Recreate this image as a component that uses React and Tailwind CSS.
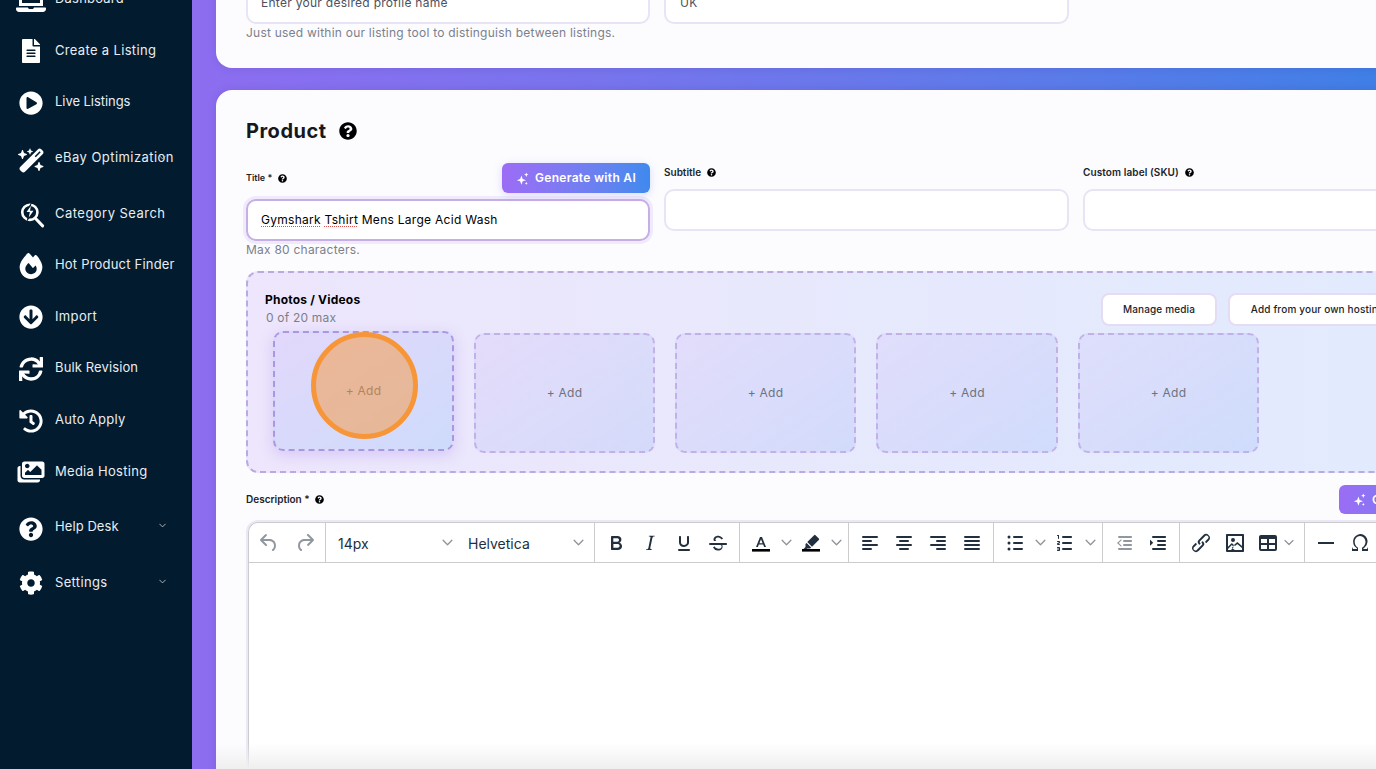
import React from "react";
import { FaLaptop, FaFileAlt, FaPlayCircle, FaArrowCircleDown, FaSync, FaHistory, FaImages, FaQuestionCircle, FaCog } from "react-icons/fa";
import { FaWandMagicSparkles, FaFire } from "react-icons/fa6";

const SearchBolt = ({ className }) => (
  <svg viewBox="0 0 24 24" className={className} fill="none" stroke="currentColor">
    <circle cx="10" cy="9.5" r="7" strokeWidth="2.4" />
    <path d="M11.5 0.5 4.8 10.2h3.8l-1.6 8.3 7.6-10.6h-4z" fill="#021b2f" stroke="none" />
    <path d="M11 3.5 7 9.2h3l-1 5 4.4-6.2h-3.2z" fill="currentColor" stroke="none" />
    <path d="M15.5 15.5 21.8 22" strokeWidth="2.8" strokeLinecap="round" />
  </svg>
);

const nav = [
  { label: "Dashboard", icon: <FaLaptop className="w-[30px] h-[30px]" />, row: "h-[50px] -mt-[25px]", text: "mb-[2px] tracking-[0.2px]" },
  { label: "Create a Listing", icon: <FaFileAlt className="w-[24px] h-[24px]" />, row: "h-[52px]", text: "mb-[0px] tracking-[0.33px]" },
  { label: "Live Listings", icon: <FaPlayCircle className="w-[24px] h-[24px]" />, row: "h-[52px]", text: "mb-[2px] tracking-[-0.05px]" },
  { label: "eBay Optimization", icon: <FaWandMagicSparkles className="w-[27px] h-[27px]" />, row: "h-[62px]", text: "mb-[4px] tracking-[0.45px]", chevron: "top-[26px]" },
  { label: "Category Search", icon: <SearchBolt className="w-[26px] h-[26px] ml-[1px]" />, row: "h-[48px]", text: "mb-[2px] tracking-[0.47px]" },
  { label: "Hot Product Finder", icon: <FaFire className="w-[26px] h-[26px]" />, row: "h-[54px]", text: "mb-[2px] tracking-[0.2px]" },
  { label: "Import", icon: <FaArrowCircleDown className="w-[24px] h-[24px]" />, row: "h-[48px]", text: "mb-[0px] tracking-[0.35px]" },
  { label: "Bulk Revision", icon: <FaSync className="w-[24px] h-[24px]" />, row: "h-[56px]", text: "mb-[2px] tracking-[0.12px]" },
  { label: "Auto Apply", icon: <FaHistory className="w-[24px] h-[24px]" />, row: "h-[48px]", text: "mb-[2px] tracking-[0.3px]" },
  { label: "Media Hosting", icon: <FaImages className="w-[28px] h-[24px]" />, row: "h-[54px]", text: "mb-[0px] tracking-[0.28px]" },
  { label: "Help Desk", icon: <FaQuestionCircle className="w-[24px] h-[24px]" />, row: "h-[60px]", text: "mb-[4px] tracking-[0.08px]", chevron: "top-[24px]" },
  { label: "Settings", icon: <FaCog className="w-[24px] h-[24px]" />, row: "h-[48px]", text: "mb-[0px] tracking-[0.33px]", chevron: "top-[20px]" },
];

const Chevron = ({ className = "" }) => (
  <svg viewBox="0 0 10 6" className={className} fill="none" stroke="currentColor" strokeWidth="1.2" strokeLinecap="round" strokeLinejoin="round">
    <path d="M1 1l4 4 4-4" />
  </svg>
);

const Help = ({ className = "" }) => (
  <FaQuestionCircle className={"text-black " + className} />
);

const Sparkle = ({ className = "" }) => (
  <svg viewBox="0 0 24 24" className={className} fill="currentColor">
    <path d="M10 6.5 12.3 12.7 18.5 15 12.3 17.3 10 23.5 7.7 17.3 1.5 15 7.7 12.7z" />
    <path d="M19 1 20.2 3.8 23 5 20.2 6.2 19 9 17.8 6.2 15 5 17.8 3.8z" />
    <path d="M19 18 19.9 20.1 22 21 19.9 21.9 19 24 18.1 21.9 16 21 18.1 20.1z" />
  </svg>
);

const Ico = ({ d, className = "text-[#222f3e]" }) => (
  <svg viewBox="0 0 24 24" className={"w-[24px] h-[24px] " + className} fill="currentColor"><path d={d} /></svg>
);

const P = {
  undo: "M6.4 8H12c3.7 0 6.2 2 6.8 5.1.6 2.7-.4 5.6-2.3 6.8a1 1 0 0 1-1-1.8c1.1-.6 1.8-2.7 1.4-4.6-.5-2.1-2.1-3.5-4.9-3.5H6.4l3.3 3.3a1 1 0 1 1-1.4 1.4l-5-5a1 1 0 0 1 0-1.4l5-5a1 1 0 0 1 1.4 1.4L6.4 8Z",
  redo: "M17.6 10H12c-2.8 0-4.4 1.4-4.9 3.5-.4 2 .3 4 1.4 4.6a1 1 0 1 1-1 1.8c-2-1.2-2.9-4.1-2.3-6.8.6-3 3-5.1 6.8-5.1h5.6l-3.3-3.3a1 1 0 1 1 1.4-1.4l5 5a1 1 0 0 1 0 1.4l-5 5a1 1 0 0 1-1.4-1.4l3.3-3.3Z",
  bold: "M7.8 19c-.3 0-.5 0-.6-.2l-.2-.5V5.7c0-.2 0-.4.2-.5l.6-.2h5c1.5 0 2.7.3 3.5 1 .7.6 1.1 1.4 1.1 2.5a3 3 0 0 1-.6 1.9c-.4.6-1 1-1.6 1.2.4.1.9.3 1.3.6s.8.7 1 1.2c.4.4.5 1 .5 1.6 0 1.3-.4 2.3-1.3 3-.8.7-2.1 1-3.8 1H7.8Zm5-8.3c.6 0 1.2-.1 1.6-.5.4-.3.6-.7.6-1.3 0-1.1-.8-1.7-2.3-1.7H9.3v3.5h3.4Zm.5 6c.7 0 1.3-.1 1.7-.4.4-.4.6-.9.6-1.5s-.2-1-.7-1.4c-.4-.3-1-.4-2-.4H9.4v3.8h4Z",
  italic: "M16.7 4.7l-.1.9h-.3c-.6 0-1 0-1.4.3-.3.3-.4.6-.5 1.1l-2.1 9.8v.6c0 .5.4.8 1.4.8h.2l-.2.8H8l.2-.8h.2c1.1 0 1.8-.5 2-1.5l2-9.8.1-.5c0-.6-.4-.8-1.4-.8h-.3l.2-.9h5.8Z",
  underline: "M16 5c.6 0 1 .4 1 1v5.5a4 4 0 0 1-.4 1.8l-.2.3a4.9 4.9 0 0 1-4.4 2.4c-3 0-5-2-5-4.5V6c0-.6.4-1 1-1s1 .4 1 1v5.5c0 1.4 1.3 2.5 3 2.5s3-1.1 3-2.5V6c0-.6.4-1 1-1ZM7 18h10c.6 0 1 .4 1 1s-.4 1-1 1H7a1 1 0 0 1 0-2Z",
  strike: "M15.6 8.5c-.5-.7-1-1.1-1.3-1.3-.6-.4-1.3-.6-2-.6-2.7 0-2.8 1.7-2.8 2.1 0 .7.3 1.2.8 1.3H8c-.3-.5-.5-1-.5-1.6C7.5 7 8.9 4.7 12.3 4.7c1.7 0 3.1.8 4.8 2.7l-1.5 1.1ZM4 12h16c.6 0 1 .4 1 1s-.4 1-1 1h-3.8c.3.5.4 1 .4 1.5 0 1.4-.7 4.1-5 4.1A6.2 6.2 0 0 1 7 16.4l1.5-1.1c.4.6 1.6 2.4 3.7 2.4 1.6 0 2.5-.4 3-1 .3-.4.4-.9.4-1.3 0-.6-.3-1.1-1-1.4H4a1 1 0 0 1 0-2Z",
  left: "M5 5h14a1 1 0 0 1 0 2H5a1 1 0 1 1 0-2Zm0 4h8a1 1 0 0 1 0 2H5a1 1 0 1 1 0-2Zm0 8h8a1 1 0 0 1 0 2H5a1 1 0 0 1 0-2Zm0-4h14a1 1 0 0 1 0 2H5a1 1 0 0 1 0-2Z",
  center: "M5 5h14a1 1 0 0 1 0 2H5a1 1 0 1 1 0-2Zm3 4h8a1 1 0 0 1 0 2H8a1 1 0 1 1 0-2Zm0 8h8a1 1 0 0 1 0 2H8a1 1 0 0 1 0-2Zm-3-4h14a1 1 0 0 1 0 2H5a1 1 0 0 1 0-2Z",
  right: "M5 5h14a1 1 0 0 1 0 2H5a1 1 0 1 1 0-2Zm6 4h8a1 1 0 0 1 0 2h-8a1 1 0 0 1 0-2Zm0 8h8a1 1 0 0 1 0 2h-8a1 1 0 0 1 0-2Zm-6-4h14a1 1 0 0 1 0 2H5a1 1 0 0 1 0-2Z",
  justify: "M5 5h14a1 1 0 0 1 0 2H5a1 1 0 1 1 0-2Zm0 4h14a1 1 0 0 1 0 2H5a1 1 0 1 1 0-2Zm0 4h14a1 1 0 0 1 0 2H5a1 1 0 0 1 0-2Zm0 4h14a1 1 0 0 1 0 2H5a1 1 0 0 1 0-2Z",
  bullist: "M11 5h8a1 1 0 0 1 0 2h-8a1 1 0 0 1 0-2Zm0 6h8a1 1 0 0 1 0 2h-8a1 1 0 0 1 0-2Zm0 6h8a1 1 0 0 1 0 2h-8a1 1 0 0 1 0-2ZM4.5 6a1.5 1.5 0 1 0 3 0 1.5 1.5 0 0 0-3 0Zm0 6a1.5 1.5 0 1 0 3 0 1.5 1.5 0 0 0-3 0Zm0 6a1.5 1.5 0 1 0 3 0 1.5 1.5 0 0 0-3 0Z",
  numlist: "M10 17h8c.6 0 1 .4 1 1s-.4 1-1 1h-8a1 1 0 0 1 0-2Zm0-6h8c.6 0 1 .4 1 1s-.4 1-1 1h-8a1 1 0 0 1 0-2Zm0-6h8c.6 0 1 .4 1 1s-.4 1-1 1h-8a1 1 0 1 1 0-2ZM6 4v3.5c0 .3-.2.5-.5.5a.5.5 0 0 1-.5-.5V5h-.5a.5.5 0 0 1 0-1H6Zm-1 8.8.2.2h1.3c.3 0 .5.2.5.5s-.2.5-.5.5H4.9a1 1 0 0 1-.9-1V13c0-.4.3-.8.6-1l1.2-.4.2-.3a.2.2 0 0 0-.2-.2H4.5a.5.5 0 0 1-.5-.5c0-.3.2-.5.5-.5h1.6c.5 0 .9.4.9 1v.4c0 .4-.3.8-.6 1l-1.2.4-.2.3ZM7 17v2c0 .6-.4 1-1 1H4.5a.5.5 0 0 1 0-1h1.2c.2 0 .3-.1.3-.3 0-.2-.1-.3-.3-.3H4.4a.4.4 0 1 1 0-.8h1.3c.2 0 .3-.1.3-.3 0-.2-.1-.3-.3-.3H4.5a.5.5 0 1 1 0-1H6c.6 0 1 .4 1 1Z",
  outdent: "M7 5h12c.6 0 1 .4 1 1s-.4 1-1 1H7a1 1 0 1 1 0-2Zm5 4h7c.6 0 1 .4 1 1s-.4 1-1 1h-7a1 1 0 0 1 0-2Zm0 4h7c.6 0 1 .4 1 1s-.4 1-1 1h-7a1 1 0 0 1 0-2Zm-5 4h12a1 1 0 0 1 0 2H7a1 1 0 0 1 0-2Zm2.6-2.3L6.8 12l2.8-2.7a.5.5 0 0 0-.7-.7L5 12l3.9 3.4a.5.5 0 0 0 .7-.7Z",
  indent: "M7 5h12c.6 0 1 .4 1 1s-.4 1-1 1H7a1 1 0 1 1 0-2Zm5 4h7c.6 0 1 .4 1 1s-.4 1-1 1h-7a1 1 0 0 1 0-2Zm0 4h7c.6 0 1 .4 1 1s-.4 1-1 1h-7a1 1 0 0 1 0-2Zm-5 4h12a1 1 0 0 1 0 2H7a1 1 0 0 1 0-2Zm-2.6-2.6 2.8-2.7-2.8-2.8c-.3-.2-.4-.2-.4.3v5c0 .4.1.4.4.2Z",
  link: "M6.2 12.3a1 1 0 0 1 1.4 1.4l-2 2a2 2 0 1 0 2.6 2.8l4.8-4.8a1 1 0 0 0 0-1.4 1 1 0 1 1 1.4-1.3 2.9 2.9 0 0 1 0 4L9.6 20a3.9 3.9 0 0 1-5.5-5.5l2-2Zm11.6-.6a1 1 0 0 1-1.4-1.4l2-2a2 2 0 1 0-2.6-2.8L11 10.3a1 1 0 0 0 0 1.4 1 1 0 1 1-1.4 1.3 2.9 2.9 0 0 1 0-4L14.4 4a3.9 3.9 0 0 1 5.5 5.5l-2 2Z",
  image: "m5 15.7 3.3-3.2c.3-.3.7-.3 1 0L12 15l1.8-1.5c.3-.3.7-.3 1 0l4.2 3.6V5H5v10.7ZM5 18v1h3l2.8-2.9-2-2L5 17.9Zm14-3-4.7-4L11 14l-2.2 3 3 2H19v-1ZM4 3h16c.6 0 1 .4 1 1v16c0 .6-.4 1-1 1H4a1 1 0 0 1-1-1V4c0-.6.4-1 1-1Zm6 8a2 2 0 1 1 0-4 2 2 0 0 1 0 4Z",
  table: "M19 4a2 2 0 0 1 2 2v12a2 2 0 0 1-2 2H5a2 2 0 0 1-2-2V6c0-1.1.9-2 2-2h14ZM5 14v4h6v-4H5Zm14 0h-6v4h6v-4Zm0-6h-6v4h6V8ZM5 12h6V8H5v4Z",
  hr: "M4 11h16v2H4z",
  omega: "M15 18h4l1-2v4h-6v-3.3l1.4-1a6 6 0 0 0 1.8-2.9 6.3 6.3 0 0 0-.1-4.1 5.8 5.8 0 0 0-3-3.2c-.6-.3-1.3-.5-2.1-.5a5.1 5.1 0 0 0-3.9 1.8 6.3 6.3 0 0 0-1.4 4.3c0 .9.2 1.7.6 2.6.4.9 1 1.6 1.7 2.2l1 .9V20H4v-4l1 2h4v-.6l-1.6-1.5a7 7 0 0 1-2-3 7.6 7.6 0 0 1 .3-5.4 7 7 0 0 1 2.7-3A7.9 7.9 0 0 1 12.2 3c1.5 0 2.8.4 4 1.2 1.1.8 2 1.8 2.6 3 .6 1.2.8 2.5.7 3.9a7.5 7.5 0 0 1-2.7 5.2L15 18Z",
  textcolor: "M11 6h2l4 10h-1.9l-.9-2.4H9.8L8.9 16H7l4-10Zm1 2.3-1.6 3.9h3.2L12 8.3Z",
  highlight: "M16.5 4.2 19.8 7.5a1 1 0 0 1 0 1.4L13 15.7l-4.7-4.7 6.8-6.8a1 1 0 0 1 1.4 0ZM7.6 11.9l4.5 4.5-1 1H8.2L7 18.5H4l2.5-2.5v-3l1.1-1.1Z",
};

const Btn = ({ d, w = "w-[34px]", c }) => (
  <div className={w + " h-full shrink-0 flex items-center justify-center"}><Ico d={d} className={c} /></div>
);
const Drop = ({ w = "w-[16px]" }) => (
  <div className={w + " h-full shrink-0 flex items-center justify-center text-[#8f949b]"}><Chevron className="w-[11px] h-[7px]" /></div>
);
const Swatch = ({ d }) => (
  <div className="w-[34px] h-full shrink-0 flex flex-col items-center justify-center">
    <svg viewBox="0 0 24 24" className="w-[24px] h-[24px] text-[#222f3e]" fill="currentColor"><path d={d} /><rect x="3" y="18" width="18" height="2.6" fill="#000" /></svg>
  </div>
);

const Tile = ({ active, w = "w-[181px]" }) => (
  <div className={w + " h-[120px] shrink-0 rounded-[10px] border-2 border-dashed flex items-center justify-center text-[12px] tracking-[0.25px] bg-gradient-to-br " + (active ? "-translate-y-[2px] border-[#ab97df] from-[#e2d8fb] to-[#cedbfb] shadow-[0_4px_14px_rgba(150,110,240,0.25)] text-[#6c7280]" : "border-[#c1b1e8] from-[#a880f0]/10 to-[#5f8ff5]/15 text-[#6c7280]")}>
    + Add
  </div>
);

const Field = ({ children, className = "border-[#e8e3f5]", pad = "pl-[14px]" }) => (
  <div className={"h-[42px] rounded-[10px] border-2 bg-white flex items-center text-[12px] tracking-[0.28px] text-[#4b5160] " + pad + " " + className}>{children}</div>
);

const Spell = ({ children }) => (
  <span className="underline decoration-dotted decoration-[#d9534f] underline-offset-2">{children}</span>
);

export default function App() {
  return (
    <div className="w-[1376px] h-[769px] flex overflow-hidden font-['Inter',sans-serif]">
      <aside className="w-[192px] shrink-0 bg-[#021b2f] text-[#e8edf2]">
        {nav.map((n) => (
          <div key={n.label} className={"relative flex items-center pl-[16px] " + n.row}>
            <div className="w-[30px] h-[30px] flex items-center justify-center text-white shrink-0">{n.icon}</div>
            <span className={"ml-[9px] text-[13px] whitespace-nowrap " + n.text}>{n.label}</span>
            {n.chevron && <Chevron className={"absolute left-[159px] w-[7px] h-[5px] text-[#c5ced6] " + n.chevron} />}
          </div>
        ))}
      </aside>

      <main className="relative flex-1 min-w-0 h-full overflow-hidden pl-[24px] bg-gradient-to-r from-[#8d6df0] to-[#3f7fe6]">
        <section className="w-[1300px] h-[167px] -mt-[99px] rounded-[16px] bg-[#fcfcff] pl-[30px] pt-[81px] shadow-[0_0_8px_rgba(70,50,150,0.18)]">
          <div className="grid grid-cols-[404px_405px] gap-x-[14px]">
            <Field pad="pl-[13px]">Enter your desired profile name</Field>
            <Field>UK</Field>
          </div>
          <p className="text-[12px] leading-[18px] tracking-[0.23px] text-[#7b808b]">Just used within our listing tool to distinguish between listings.</p>
        </section>

        <section className="w-[1300px] h-[760px] mt-[22px] rounded-[16px] bg-[#fcfcff] pl-[30px] pt-[27px] shadow-[0_0_8px_rgba(70,50,150,0.18)]">
          <div className="flex items-center h-[28px]">
            <h2 className="text-[20px] leading-[28px] font-bold tracking-[0.5px] text-[#16181d]">Product</h2>
            <Help className="w-[18px] h-[18px] ml-[12px]" />
          </div>

          <div className="grid grid-cols-[404px_405px_404px] gap-x-[14px] mt-[18px]">
            <div>
              <div className="flex items-center justify-between h-[30px]">
                <span className="flex items-center text-[9px] font-semibold text-[#20232a]">Title *<Help className="w-[9px] h-[9px] ml-[6px]" /></span>
                <button className="w-[148px] h-[30px] rounded-[6px] flex items-center justify-center text-white text-[12px] font-semibold tracking-[0.3px] bg-gradient-to-r from-[#9b6cf5] to-[#3d8aee] shadow-[0_2px_8px_rgba(120,110,240,0.25)]">
                  <Sparkle className="w-[13px] h-[13px] mr-[6px]" />Generate with AI
                </button>
              </div>
              <Field pad="pl-[13px]" className="mt-[6px] border-[#c6aee6] text-black shadow-[0_0_0_3px_rgba(190,160,240,0.18)]">
                <span><Spell>Gymshark</Spell> <Spell>Tshirt</Spell> Mens Large Acid Wash</span>
              </Field>
              <p className="text-[12px] leading-[18px] tracking-[0.23px] text-[#7b808b]">Max 80 characters.</p>
            </div>
            <div>
              <div className="h-[18px] flex items-center text-[10px] font-semibold text-[#20232a]">Subtitle<Help className="w-[9px] h-[9px] ml-[6px]" /></div>
              <Field className="mt-[8px] border-[#e8e3f5]" />
            </div>
            <div>
              <div className="h-[18px] flex items-center text-[10px] font-semibold tracking-[0.1px] text-[#20232a]">Custom label (SKU)<Help className="w-[9px] h-[9px] ml-[6px]" /></div>
              <Field className="mt-[8px] border-[#e8e3f5]" />
            </div>
          </div>

          <div className="w-[1220px] h-[202px] mt-[12px] rounded-[12px] border-2 border-dashed border-[#bba9e2] bg-gradient-to-r from-[#ede6fc] to-[#e1ebfd] pl-[17px] pt-[18px]">
            <div className="flex">
              <div className="w-[836px] shrink-0">
                <div className="text-[12px] leading-[18px] font-bold tracking-[0.2px] text-black">Photos / Videos</div>
                <div className="text-[12px] leading-[18px] tracking-[0.2px] pl-px text-[#7b808b]">0 of 20 max</div>
              </div>
              <button className="w-[116px] h-[33px] mt-[2px] shrink-0 rounded-[8px] border-2 border-[#e4dcf5] bg-white text-[10px] font-medium tracking-[0.15px] text-[#20232a]">Manage media</button>
              <button className="w-[179px] h-[33px] mt-[2px] ml-[11px] shrink-0 rounded-[8px] border-2 border-[#e4dcf5] bg-white text-[10px] font-medium tracking-[0.15px] text-[#20232a]">Add from your own hosting</button>
            </div>
            <div className="relative flex gap-[20px] ml-[8px] mt-[6px]">
              <Tile active /><Tile /><Tile /><Tile w="w-[182px]" /><Tile />
              <div className="absolute left-[38px] -top-[1px] w-[107px] h-[107px] rounded-full border-[5px] border-[#f79638] bg-[#f79638]/50" />
            </div>
          </div>

          <div className="flex items-center h-[29px] mt-[12px]">
            <div className="w-[1093px] shrink-0 flex items-center text-[10px] font-semibold text-[#20232a]">Description *<Help className="w-[9px] h-[9px] ml-[5px]" /></div>
            <button className="w-[148px] h-[29px] rounded-[6px] flex items-center pl-[14px] text-white text-[12px] font-semibold tracking-[0.3px] bg-gradient-to-r from-[#9b6cf5] to-[#3d8aee]">
              <Sparkle className="w-[13px] h-[13px] mr-[6px]" />Generate with AI
            </button>
          </div>

          <div className="w-[1240px] h-[300px] mt-[8px] ml-[2px] rounded-tl-[10px] border-t border-l border-[#cccccc] bg-white shadow-[0_0_0_2px_#ebe7f6]">
            <div className="flex h-[40px] border-b border-[#cccccc] text-[14px] text-[#222f3e]">
              <div className="w-[77px] shrink-0 flex pl-[2px] border-r border-[#cccccc]">
                <Btn d={P.undo} w="w-[36px]" c="text-[#222f3e]/50" /><Btn d={P.redo} w="w-[36px]" c="text-[#222f3e]/50" />
              </div>
              <div className="w-[269px] shrink-0 flex items-center pl-[12px] pt-[2px] border-r border-[#cccccc]">
                <span className="w-[100px]">14px</span>
                <Chevron className="w-[11px] h-[7px] text-[#8f949b] ml-[4px] -mt-[2px]" />
                <span className="w-[105px] ml-[15px]">Helvetica</span>
                <Chevron className="w-[11px] h-[7px] text-[#8f949b] -mt-[2px]" />
              </div>
              <div className="w-[145px] shrink-0 flex pl-[4px] border-r border-[#cccccc]">
                <Btn d={P.bold} /><Btn d={P.italic} /><Btn d={P.underline} /><Btn d={P.strike} />
              </div>
              <div className="w-[109px] shrink-0 flex pl-[4px] border-r border-[#cccccc]">
                <Swatch d={P.textcolor} /><Drop /><Swatch d={P.highlight} /><Drop />
              </div>
              <div className="w-[145px] shrink-0 flex pl-[4px] border-r border-[#cccccc]">
                <Btn d={P.left} /><Btn d={P.center} /><Btn d={P.right} /><Btn d={P.justify} />
              </div>
              <div className="w-[109px] shrink-0 flex pl-[4px] border-r border-[#cccccc]">
                <Btn d={P.bullist} /><Drop /><Btn d={P.numlist} /><Drop />
              </div>
              <div className="w-[77px] shrink-0 flex pl-[4px] border-r border-[#cccccc]">
                <Btn d={P.outdent} c="text-[#222f3e]/50" /><Btn d={P.indent} />
              </div>
              <div className="w-[125px] shrink-0 flex pl-[4px] border-r border-[#cccccc]">
                <Btn d={P.link} /><Btn d={P.image} /><Btn d={P.table} w="w-[32px]" /><Drop w="w-[10px]" />
              </div>
              <div className="shrink-0 flex pl-[4px]">
                <Btn d={P.hr} /><Btn d={P.omega} />
              </div>
            </div>
          </div>
        </section>
        <div className="absolute left-[24px] right-0 bottom-0 h-[26px] bg-gradient-to-b from-transparent to-[#efefef]" />
      </main>
    </div>
  );
}
